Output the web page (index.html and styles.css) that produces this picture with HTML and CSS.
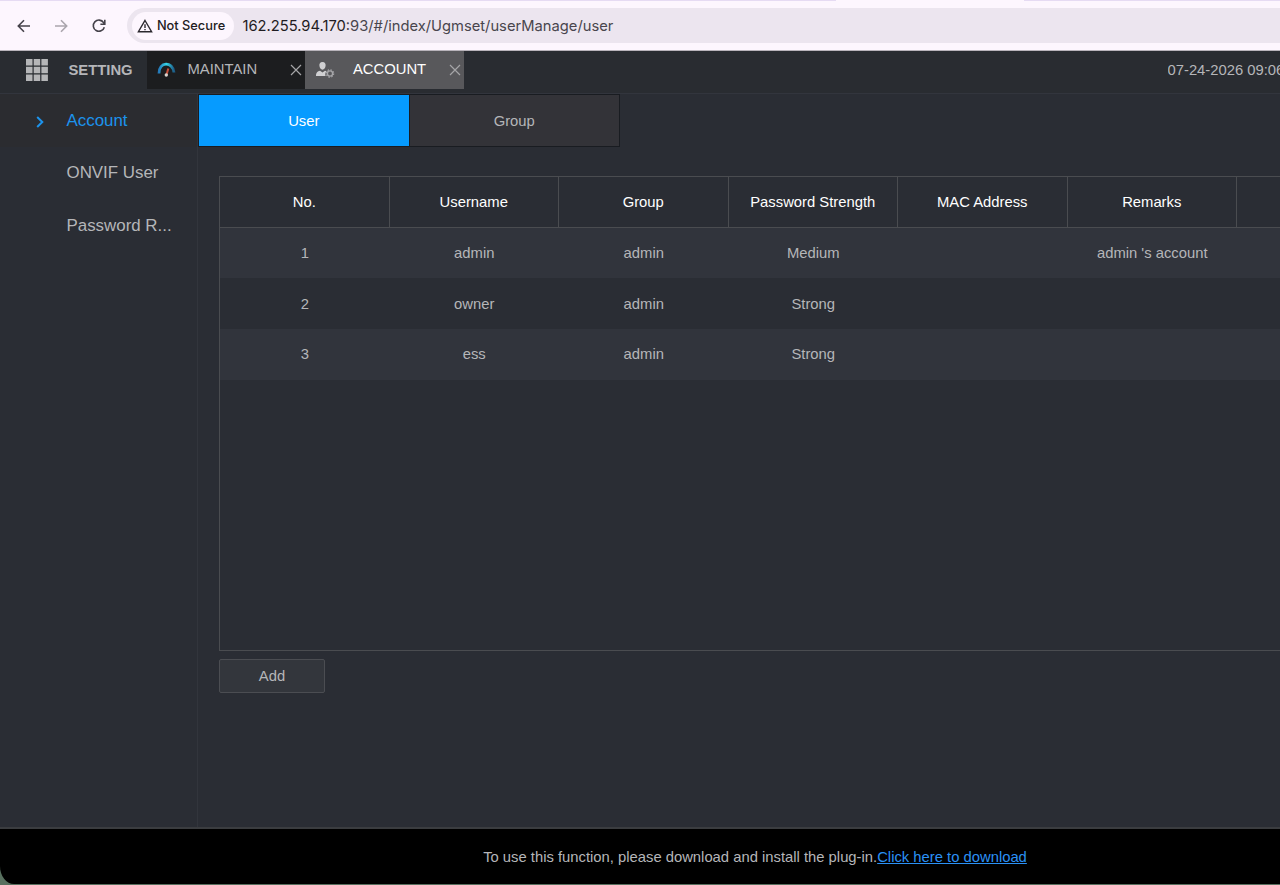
FILE: index.html
```
<!DOCTYPE html>
<html lang="en">
<head>
  <meta charset="UTF-8" />
  <meta name="viewport" content="width=device-width, initial-scale=1.0" />
  <title>Account</title>
  <link rel="stylesheet" href="styles.css">
</head>
<body>
<!-- Browser bar -->
<div class="tab-strip"><span class="active-tab"></span></div>
<div class="browser-bar">
  <svg class="nav-icon" width="16" height="16" viewBox="0 0 16 16"><path d="M14 8H2.500M8 2.300L2.300 8L8 13.700" /></svg>
  <svg class="nav-icon disabled" width="16" height="16" viewBox="0 0 16 16"><path d="M2 8H13.500M8 2.300L13.700 8L8 13.700" /></svg>
  <svg class="nav-icon" width="16" height="16" viewBox="0 0 16 16"><path d="M13.300 9.200A5.600 5.600 0 1 1 12.600 4.600L13.700 6M13.800 1.800V6.200H9.400" /></svg>
  <div class="address">
    <div class="not-secure">
      <svg width="16" height="14" viewBox="0 0 16 14"><path d="M8 1.500L14.600 12.700H1.400Z" /><path d="M8 5.300V9M8 10V11.300" /></svg>
      <span>Not Secure</span>
    </div>
    <span class="url"><b>162.255.94.170</b>:93/#/index/Ugmset/userManage/user</span>
  </div>
</div>

<!-- App header -->
<header>
  <svg class="menu-icon" width="22" height="22" viewBox="0 0 22 22">
    <path d="M0 0h6.500v6.500H0zM7.700 0h6.500v6.500H7.700zM15.400 0h6.500v6.500h-6.500zM0 7.700h6.500v6.500H0zM7.700 7.700h6.500v6.500H7.700zM15.400 7.700h6.500v6.500h-6.500zM0 15.400h6.500v6.500H0zM7.700 15.400h6.500v6.500H7.700zM15.400 15.400h6.500v6.500h-6.500z" />
  </svg>
  <span class="setting">SETTING</span>
  <div class="page-tab">
    <svg class="tab-icon" width="20" height="20" viewBox="0 0 20 20">
      <defs>
        <linearGradient id="gauge"><stop offset="0" stop-color="#2478b8" /><stop offset="0.500" stop-color="#35d4e6" /><stop offset="1" stop-color="#1c5c88" /></linearGradient>
      </defs>
      <path d="M2 13.500C1.500 1.500 16 1 17 12.500" fill="none" stroke="url(#gauge)" stroke-width="2.800" />
      <path d="M11.300 8.500L9.600 14.500" stroke="#c8503c" stroke-width="2" />
      <circle cx="9.300" cy="15" r="1.700" fill="#d8d4d0" />
    </svg>
    <span class="tab-name">MAINTAIN</span>
    <svg class="close" width="12" height="12" viewBox="0 0 12 12"><path d="M1 1L11 11M11 1L1 11" /></svg>
  </div>
  <div class="page-tab selected">
    <svg class="tab-icon" width="20" height="20" viewBox="0 0 20 20">
      <path d="M7.500 2C10 2 10.800 3.800 10.600 5.800C10.400 8 9.200 9.700 7.500 9.700S4.600 8 4.400 5.800C4.200 3.800 5 2 7.500 2ZM1 16C1 12.500 2.500 11.300 5 10.800L7.500 12.500L10 10.800L11.500 11.300C10.300 12.500 10 14.300 10.600 16Z" fill="#d0d0d2" />
      <circle cx="15" cy="13.500" r="2.600" fill="none" stroke="#a6a6a9" stroke-width="1.400" />
      <circle cx="15" cy="13.500" r="3.700" fill="none" stroke="#a6a6a9" stroke-width="1.200" stroke-dasharray="1.450 1.456" />
    </svg>
    <span class="tab-name">ACCOUNT</span>
    <svg class="close" width="12" height="12" viewBox="0 0 12 12"><path d="M1 1L11 11M11 1L1 11" /></svg>
  </div>
  <span class="clock">07-24-2026 09:06</span>
</header>

<!-- Main Content -->
<div class="container">
  <nav class="sidebar">
    <a class="active"><svg width="8" height="12" viewBox="0 0 8 12"><path d="M1.200 1L6.300 6L1.200 11" /></svg>Account</a>
    <a>ONVIF User</a>
    <a>Password R...</a>
  </nav>

  <main>
    <div class="switch">
      <button class="current">User</button>
      <button>Group</button>
    </div>
    <div class="table-box">
      <table>
        <thead>
          <tr><th>No.</th><th>Username</th><th>Group</th><th>Password Strength</th><th>MAC Address</th><th>Remarks</th><th class="cut"></th></tr>
        </thead>
        <tbody>
          <tr><td>1</td><td>admin</td><td>admin</td><td>Medium</td><td></td><td>admin 's account</td><td></td></tr>
          <tr><td>2</td><td>owner</td><td>admin</td><td>Strong</td><td></td><td></td><td></td></tr>
          <tr><td>3</td><td>ess</td><td>admin</td><td>Strong</td><td></td><td></td><td></td></tr>
        </tbody>
      </table>
    </div>
    <button class="add">Add</button>
  </main>
</div>

<!-- Plug-in notice -->
<div class="footer-wrap">
  <footer>
    <p>To use this function, please download and install the plug-in.<a href="#">Click here to download</a></p>
  </footer>
</div>
</body>
</html>
```

FILE: styles.css
```
/* Global Styles */
* {
  box-sizing: border-box;
}
body {
  font-family: "Liberation Sans", Arial, sans-serif;
  font-size: 14.8px;
  margin: 0;
  height: 885px;
  display: flex;
  flex-direction: column;
  overflow: hidden;
  background: #2a2d34;
  color: #b5b6b9;
}
svg {
  flex: none;
}
button {
  font: inherit;
  color: inherit;
  padding: 0;
}
/* Browser bar */
.tab-strip {
  height: 1px;
  flex: none;
  background: #e6dbf3;
}
.active-tab {
  display: block;
  width: 188px;
  height: 1px;
  margin-left: 836px;
  background: #fdf6fe;
}
.browser-bar {
  height: 50px;
  flex: none;
  display: flex;
  align-items: center;
  padding-left: 15.5px;
  background: #fdf6fe;
  border-bottom: 1px solid #b9b4bb;
}
.nav-icon {
  margin-right: 21.8px;
  fill: none;
  stroke: #45424a;
  stroke-width: 1.6;
}
.nav-icon.disabled {
  stroke: #aaa5ad;
}
.address {
  flex: 1;
  height: 35px;
  margin-left: -2px;
  display: flex;
  align-items: center;
  padding-left: 5px;
  border-radius: 18px 0 0 18px;
  background: #ece5ef;
  font-family: Inter, sans-serif;
}
.not-secure {
  width: 102px;
  height: 28px;
  display: flex;
  align-items: center;
  gap: 4px;
  padding-left: 5px;
  border-radius: 14px;
  background: #fdf6fe;
  color: #1f1c22;
  font-size: 12.8px;
  font-weight: 500;
  white-space: nowrap;
}
.not-secure svg {
  fill: none;
  stroke: #2b282e;
  stroke-width: 1.4;
}
.url {
  margin-left: 8.5px;
  font-size: 14.72px;
  color: #49454d;
}
.url b {
  font-weight: 400;
  color: #1f1c22;
}
/* App header */
header {
  height: 43px;
  flex: none;
  display: flex;
  align-items: flex-start;
  overflow: hidden;
  background: #292c31;
  border-bottom: 1px solid #32353d;
  line-height: 38px;
  white-space: nowrap;
}
.menu-icon {
  margin: 8px 0 0 26px;
  fill: #b5b6b8;
}
.setting {
  width: 78.5px;
  flex: none;
  margin-left: 20.5px;
  font-weight: bold;
}
.page-tab {
  width: 158px;
  height: 38px;
  flex: none;
  display: flex;
  align-items: center;
  background: #1c1d1f;
}
.page-tab.selected {
  width: 159px;
  background: #58585b;
  color: #fff;
}
.tab-icon {
  margin-left: 10px;
}
.tab-name {
  flex: 1;
  margin-left: 10.5px;
  line-height: 36px;
  height: 38px;
}
.selected .tab-name {
  margin-left: 18px;
}
.close {
  margin-right: 3px;
  fill: none;
  stroke: #a5a5a7;
  stroke-width: 1.2;
}
.clock {
  flex: 1;
  min-width: 0;
  margin-left: 703.5px;
  overflow: hidden;
}
/* Main Layout */
.container {
  flex: 1;
  min-height: 0;
  display: flex;
}
.sidebar {
  width: 198px;
  flex: none;
  border-right: 1px solid #32353c;
  font-size: 16.9px;
}
.sidebar a {
  display: flex;
  align-items: center;
  height: 52.7px;
  padding-left: 66.5px;
}
.sidebar .active {
  padding-left: 36px;
  padding-top: 1px;
  background: #2b2c30;
  color: #1c93ec;
}
.sidebar svg {
  margin: 3px 22.5px 0 0;
  fill: none;
  stroke: #1c93ec;
  stroke-width: 2;
}
main {
  flex: 1;
  min-width: 0;
}
/* User / Group switch */
.switch {
  width: 422px;
  height: 53px;
  display: flex;
  border: 1px solid #191c21;
}
.switch button {
  flex: 1;
  border: none;
  background: #333338;
}
.switch .current {
  border-right: 1px solid #191c21;
  background: #069bff;
  color: #fff;
}
/* Table */
.table-box {
  height: 475px;
  margin: 29px 0 0 21px;
  border: 1px solid #4a4c50;
  border-right: none;
}
table {
  width: 100%;
  table-layout: fixed;
  border-collapse: separate;
  border-spacing: 0;
  text-align: center;
}
th, td {
  height: 50.7px;
  padding: 0;
}
th {
  width: 169.5px;
  font-weight: normal;
  color: #fff;
  border-right: 1px solid #4a4c50;
  border-bottom: 1px solid #4a4c50;
}
th.cut {
  width: auto;
  border-right: none;
}
tbody tr:nth-child(odd) {
  background: #31343c;
}
.add {
  display: block;
  width: 106px;
  height: 34px;
  margin: 8px 0 0 21px;
  background: #33363c;
  border: 1px solid #4b4d52;
  border-radius: 2px;
}
/* Footer */
.footer-wrap {
  flex: none;
  height: 58px;
  background: #58705f;
}
footer {
  height: 57px;
  display: flex;
  justify-content: center;
  align-items: center;
  padding-left: 230px;
  background: #000;
  border-top: 2px solid #3b3d40;
  border-bottom-left-radius: 14px 18px;
}
footer p {
  margin: 0;
}
footer a {
  color: #2b91f5;
}
```
